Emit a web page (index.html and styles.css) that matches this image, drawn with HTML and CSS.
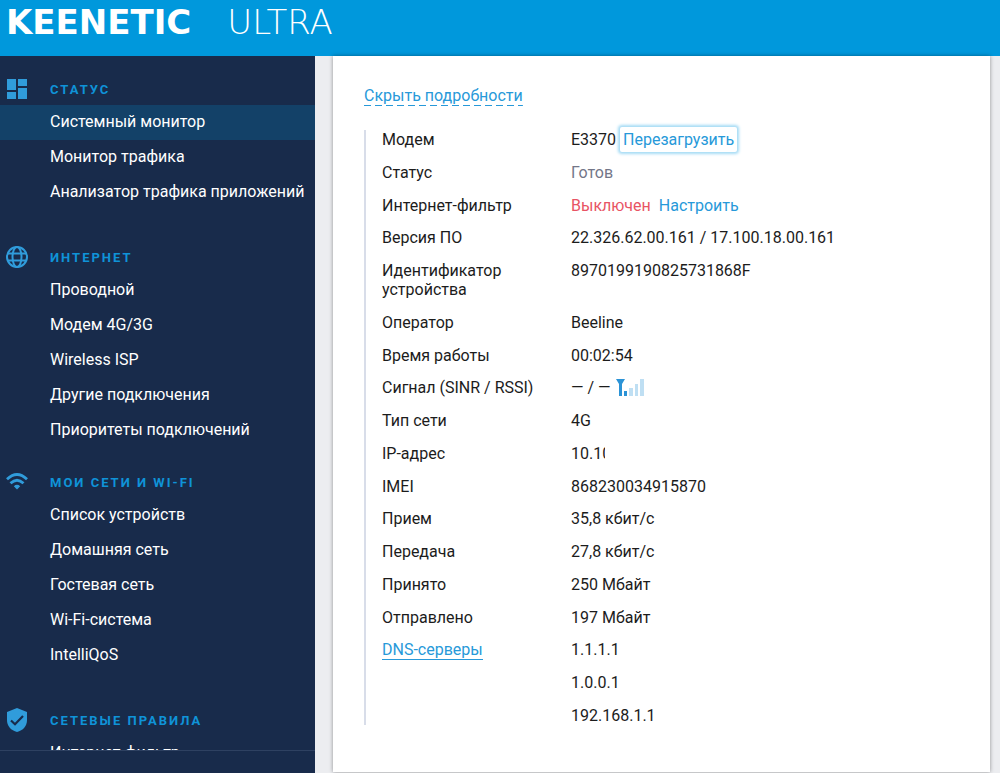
FILE: index.html
```html
<!DOCTYPE html>
<html lang="ru">
<head>
<meta charset="utf-8">
<meta name="viewport" content="width=device-width, initial-scale=1">
<title>Keenetic Ultra</title>
<link rel="stylesheet" href="styles.css">
</head>
<body>
<header class="topbar">
  <div class="brand"><span class="brand-name">KEENETIC</span><span class="brand-model">ULTRA</span></div>
</header>
<div class="layout">
  <aside class="sidebar">
    <nav class="nav">
      <section class="group">
        <h2 class="group-title">
          <svg class="icon" viewBox="0 0 24 24" fill="currentColor" aria-hidden="true"><path d="M2 2h9v11H2zM13 2h9v7h-9zM2 15h9v7H2zM13 11h9v11h-9z"/></svg>
          СТАТУС
        </h2>
        <ul class="links">
          <li><a class="link active" href="#">Системный монитор</a></li>
          <li><a class="link" href="#">Монитор трафика</a></li>
          <li><a class="link" href="#">Анализатор трафика приложений</a></li>
        </ul>
      </section>
      <section class="group compact">
        <h2 class="group-title">
          <svg class="icon" viewBox="0 0 24 24" fill="none" stroke="currentColor" stroke-width="2" aria-hidden="true"><circle cx="12" cy="12" r="10"/><ellipse cx="12" cy="12" rx="4.5" ry="10"/><path d="M3 8.5h18M3 15.5h18"/></svg>
          ИНТЕРНЕТ
        </h2>
        <ul class="links">
          <li><a class="link" href="#">Проводной</a></li>
          <li><a class="link" href="#">Модем 4G/3G</a></li>
          <li><a class="link" href="#">Wireless ISP</a></li>
          <li><a class="link" href="#">Другие подключения</a></li>
          <li><a class="link" href="#">Приоритеты подключений</a></li>
        </ul>
      </section>
      <section class="group">
        <h2 class="group-title">
          <svg class="icon" viewBox="0 0 24 24" fill="none" stroke="currentColor" stroke-width="2.8" aria-hidden="true"><path d="M2 9.200Q12-.2 22 9.200M5.500 13.300Q12 7.200 18.500 13.300"/><path d="M8.800 16.200Q12 13.400 15.200 16.200L12 19.500z" fill="currentColor" stroke="none"/></svg>
          МОИ СЕТИ И WI-FI
        </h2>
        <ul class="links">
          <li><a class="link" href="#">Список устройств</a></li>
          <li><a class="link" href="#">Домашняя сеть</a></li>
          <li><a class="link" href="#">Гостевая сеть</a></li>
          <li><a class="link" href="#">Wi-Fi-система</a></li>
          <li><a class="link" href="#">IntelliQoS</a></li>
        </ul>
      </section>
      <section class="group">
        <h2 class="group-title">
          <svg class="icon" viewBox="0 0 24 24" aria-hidden="true"><path fill="currentColor" d="M12 0L22 4v8c0 6-4 10.500-10 12C6 22.500 2 18 2 12V4z"/><path fill="none" stroke="#182b4b" stroke-width="2.2" d="M6 12.500l4 3.700 8-8.200"/></svg>
          СЕТЕВЫЕ ПРАВИЛА
        </h2>
        <ul class="links">
          <li><a class="link" href="#">Интернет-фильтр</a></li>
        </ul>
      </section>
    </nav>
    <div class="sidebar-foot"></div>
  </aside>
  <main class="content">
    <article class="card">
      <button class="toggle" type="button">Скрыть подробности</button>
      <dl class="details">
        <div class="row"><dt>Модем</dt><dd>E3370 <button class="restart" type="button">Перезагрузить</button></dd></div>
        <div class="row"><dt>Статус</dt><dd class="muted">Готов</dd></div>
        <div class="row"><dt>Интернет-фильтр</dt><dd><span class="off">Выключен</span><a class="setup" href="#">Настроить</a></dd></div>
        <div class="row"><dt>Версия ПО</dt><dd>22.326.62.00.161 / 17.100.18.00.161</dd></div>
        <div class="row"><dt>Идентификатор устройства</dt><dd>8970199190825731868F</dd></div>
        <div class="row"><dt>Оператор</dt><dd>Beeline</dd></div>
        <div class="row"><dt>Время работы</dt><dd>00:02:54</dd></div>
        <div class="row"><dt>Сигнал (SINR / RSSI)</dt><dd class="signal">— / —
          <svg class="bars" viewBox="0 0 28 17" aria-hidden="true"><path fill="#2b93d6" d="M0 0h9L6 5v12H3V5zM8 12h3v5H8z"/><path fill="#bfdff3" d="M13 9h4v8h-4zM19 5h3v12h-3zM24 0h4v17h-4z"/></svg></dd></div>
        <div class="row"><dt>Тип сети</dt><dd>4G</dd></div>
        <div class="row"><dt>IP-адрес</dt><dd><span class="masked">10.10</span></dd></div>
        <div class="row"><dt>IMEI</dt><dd>868230034915870</dd></div>
        <div class="row"><dt>Прием</dt><dd>35,8 кбит/с</dd></div>
        <div class="row"><dt>Передача</dt><dd>27,8 кбит/с</dd></div>
        <div class="row"><dt>Принято</dt><dd>250 Мбайт</dd></div>
        <div class="row"><dt>Отправлено</dt><dd>197 Мбайт</dd></div>
        <div class="row"><dt><a class="dns" href="#">DNS-серверы</a></dt><dd>1.1.1.1</dd></div>
        <div class="row"><dd>1.0.0.1</dd></div>
        <div class="row"><dd>192.168.1.1</dd></div>
      </dl>
    </article>
  </main>
</div>
</body>
</html>
```

FILE: styles.css
```css
* { box-sizing: border-box; }
body {
  margin: 0;
  height: 100vh;
  display: flex;
  flex-direction: column;
  overflow: hidden;
  font: 16px/19px Roboto, sans-serif;
  color: #1c1c1c;
  background: #ecedf0;
}
button {
  border: 0;
  padding: 0;
  background: none;
  font: inherit;
  color: #2799d9;
  cursor: pointer;
}
a { color: #2799d9; text-decoration: none; }
ul, dl, dd, h2 { margin: 0; padding: 0; }

.topbar {
  flex: none;
  height: 56px;
  padding: 2px 6px;
  background: #0098dc;
  color: #fff;
}
.brand {
  display: flex;
  gap: 36px;
  font: 34px/40px "DejaVu Sans", sans-serif;
}
.brand-name { font-weight: 700; }
.brand-model { font-weight: 200; }

.layout { flex: 1; min-height: 0; display: flex; }

.sidebar {
  flex: none;
  width: 315px;
  display: flex;
  flex-direction: column;
  background: #182b4b;
}
.nav { flex: 1; min-height: 0; overflow: hidden; padding-top: 17px; }
.sidebar-foot { height: 23px; border-top: 1px solid #2e4161; }
.group { margin-bottom: 31px; }
.group.compact { margin-bottom: 18px; }
.group-title {
  display: flex;
  align-items: center;
  gap: 21px;
  height: 32px;
  padding-left: 5px;
  font-size: 13px;
  font-weight: 700;
  letter-spacing: 2px;
  color: #0f93d8;
}
.icon { width: 24px; height: 24px; color: #309cdb; }
.links { list-style: none; }
.link {
  display: block;
  height: 35px;
  padding-left: 50px;
  line-height: 34px;
  color: #fff;
}
.link.active { background: #134168; }

.content { flex: 1; min-width: 0; padding: 0 10px 1px 18px; }
.card {
  height: 100%;
  padding: 30px 31px 0;
  background: #fff;
  box-shadow: 0 0 4px rgba(0, 0, 0, .4);
}
.toggle {
  padding-bottom: 1px;
  background: repeating-linear-gradient(90deg, #2799d9 0 7px, transparent 7px 11px) bottom / 100% 1px no-repeat;
}
.details {
  display: grid;
  align-content: space-between;
  min-height: 595px;
  margin-top: 24px;
  padding-left: 16px;
  border-left: 2px solid #d8dde9;
}
.row { display: grid; grid-template-columns: 189px 1fr; }
dt { padding-right: 24px; }
dd { grid-column: 2; }
.restart {
  margin: -3px 0;
  padding: 3px;
  border-radius: 2px;
  box-shadow: 0 0 3px 2px #a5dbf5;
}
.muted { color: #737688; }
.off { margin-right: 8px; color: #e85464; }
.signal { display: flex; align-items: center; gap: 5px; }
.bars { width: 28px; height: 17px; }
.masked { display: block; width: 34px; overflow: hidden; }
.dns { border-bottom: 1px solid #2799d9; }
```
